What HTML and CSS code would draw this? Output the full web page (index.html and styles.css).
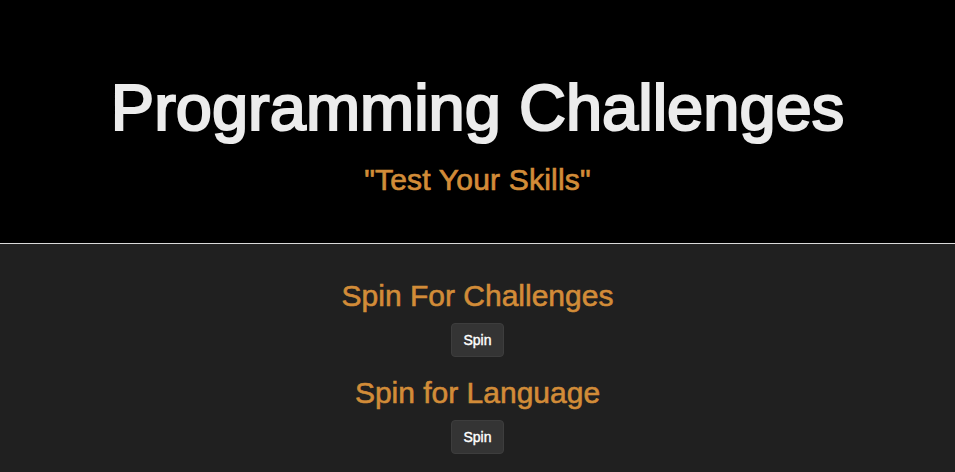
FILE: index.html
```html
<!DOCTYPE html>
<html>
<head>
<meta charset="utf-8">
<link rel="stylesheet" href="styles.css">
</head>
<body>
<header class="hero">
  <h1 class="title">Programming Challenges</h1>
  <p class="subtitle">"Test Your Skills"</p>
</header>
<main class="content">
  <section class="spinner">
    <h2 class="spin-heading">Spin For Challenges</h2>
    <button class="spin-btn">Spin</button>
  </section>
  <section class="spinner">
    <h2 class="spin-heading">Spin for Language</h2>
    <button class="spin-btn">Spin</button>
  </section>
</main>
</body>
</html>
```
FILE: styles.css
```css
html, body {
  margin: 0;
  padding: 0;
  height: 100%;
}
body {
  background: #202020;
  font-family: "Liberation Sans", Arial, Helvetica, sans-serif;
  display: flex;
  flex-direction: column;
}
.hero {
  background: #000;
  box-sizing: border-box;
  border-bottom: 1px solid #d9d9d9;
  height: 244px;
  display: flex;
  flex-direction: column;
  align-items: center;
  padding-top: 76px;
}
.title {
  margin: 0;
  font-size: 65px;
  line-height: 64px;
  font-weight: normal;
  color: #ececec;
  -webkit-text-stroke: 2.2px #ececec;
}
.subtitle {
  margin: 25px 0 0;
  font-size: 30px;
  line-height: 30px;
  color: #d28c38;
  letter-spacing: 0.2px;
  -webkit-text-stroke: 0.7px #d28c38;
}
.content {
  flex: 1;
  display: flex;
  flex-direction: column;
  align-items: center;
  padding-top: 37px;
  gap: 21px;
}
.spinner {
  display: flex;
  flex-direction: column;
  align-items: center;
  gap: 12px;
}
.spin-heading {
  margin: 0;
  font-size: 30px;
  line-height: 30px;
  font-weight: normal;
  color: #d28c38;
  -webkit-text-stroke: 0.6px #d28c38;
}
.spin-btn {
  width: 53px;
  height: 34px;
  box-sizing: border-box;
  padding: 0;
  background: #343434;
  border: 1px solid #3d3d3d;
  border-radius: 4px;
  color: #fff;
  font-family: "Liberation Sans", Arial, sans-serif;
  font-size: 14px;
  -webkit-text-stroke: 0.4px #fff;
  cursor: pointer;
}
```
